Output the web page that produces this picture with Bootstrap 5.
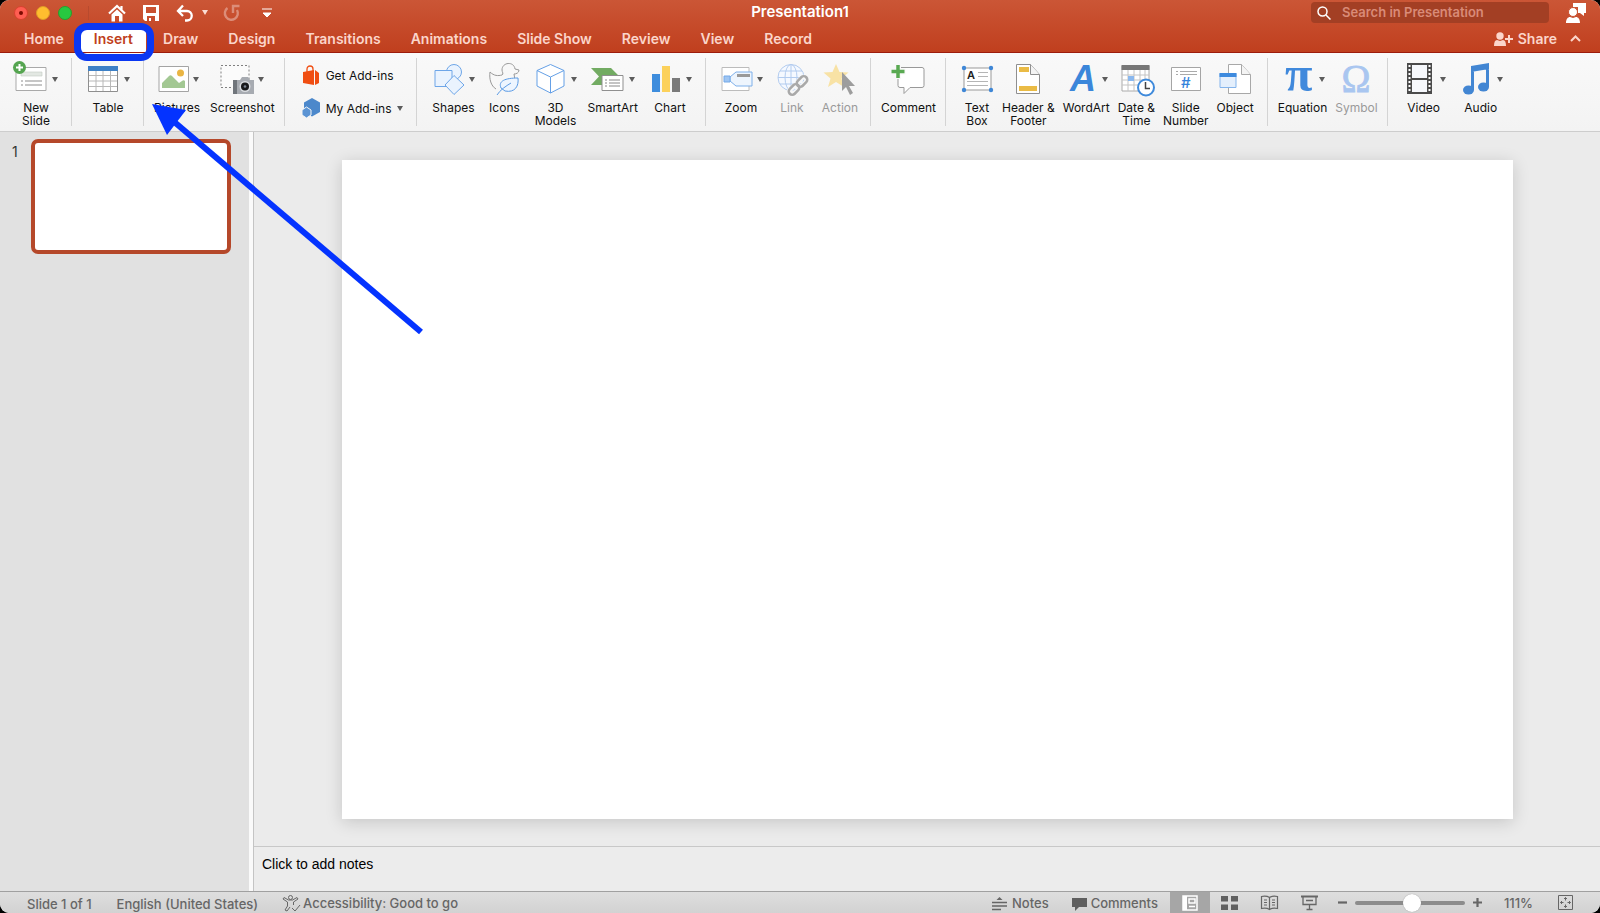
<!DOCTYPE html>
<html lang="en">
<head>
<meta charset="utf-8">
<meta name="viewport" content="width=device-width, initial-scale=1">
<title>Presentation1</title>
<link rel="stylesheet" href="https://cdn.jsdelivr.net/npm/bootstrap@5.3.0/dist/css/bootstrap.min.css">
<style>
  html { background: #000; }
  body { font-family: Inter, "Liberation Sans", sans-serif; background: #ebebeb; border-radius: 9px; color: #111; }
  button, input, textarea { font-family: inherit; }
  button { border: 0; background: none; padding: 0; color: inherit; }
  svg { display: block; overflow: visible; flex: none; }

  /* Title bar and tabs */
  .app-head { background: linear-gradient(#cb5636, #c03f1e); border-bottom: 1px solid #9c1c0c; height: 53px; }
  .title-line { height: 25px; display: grid; grid-template-columns: 1fr auto 1fr; }
  .doc-title { font-size: 15px; line-height: 24px; font-weight: 600; color: #fff; }
  .window-lights { gap: 8px; padding: 0 16px 0 14px; border-right: 1px solid #b84a2e; height: 14px; }
  .quick-tools { padding-left: 19px; gap: 16px; }
  .light { width: 14px; height: 14px; border-radius: 50%; display: flex; align-items: center; justify-content: center; }
  .light-close { background: #ff5e52; border: 1px solid #d8402f; }
  .light-close::after { content: ""; width: 4px; height: 4px; border-radius: 50%; background: #7d0a00; }
  .light-min { background: #ffbe2f; border: 1px solid #dd9b28; }
  .light-max { background: #27c840; border: 1px solid #2a9c2c; }
  .search-box { background: #a33f24; border-radius: 4px; width: 238px; height: 21px; margin-top: 2px; padding-left: 6px; gap: 11px; }
  .search-box input { background: none; border: 0; outline: 0; padding: 0; font-size: 13px; font-weight: 600; width: 190px; color: #fff; }
  .search-box input::placeholder { color: #d98b78; opacity: 1; }
  .tab-line { height: 27px; color: #fbd5ca; }
  .tab-line a, .tab-line button { font-size: 14px; line-height: 27px; font-weight: 600; color: #fbd5ca; text-decoration: none; }
  .tab-line .tab-on { background: #fff; color: #bf3f20; border-radius: 4px 4px 0 0; padding: 0 13px; margin: 3px -13px 0; line-height: 22px; position: relative; z-index: 2; }
  .ring { position: absolute; inset: -5px -8px -9px -7px; border: 7px solid #0a37f2; border-radius: 13px; pointer-events: none; }

  /* Ribbon */
  .ribbon { background: linear-gradient(#f9f9f9, #f3f3f3); border-bottom: 1px solid #cdcdcd; height: 79px; font-size: 12px; line-height: 13px; }
  .group { display: flex; align-items: flex-start; position: relative; padding: 8px 14px 0; gap: 13px; height: 100%; }
  .group::after { content: ""; position: absolute; right: 0; top: 5px; bottom: 5px; width: 1px; background: #d4d4d4; }
  .group:last-child::after { display: none; }
  .group-mid { gap: 10px; }
  .group-mid .tool { min-width: 38px; }
  .group-tight { gap: 8px; }
  .group-slim { padding-left: 10px; padding-right: 10px; }
  .group-trim { padding-left: 13px; padding-right: 12px; }
  .tool { display: flex; flex-direction: column; align-items: center; gap: 4px; color: #111; text-align: center; }
  .tool:disabled { color: #9a9a9a; }
  .tool-art { display: flex; align-items: center; gap: 4px; }
  .tool-art svg { width: 34px; height: 36px; }
  .caret { width: 0; height: 0; border: 3px solid transparent; border-top: 5px solid #5c5c5c; border-bottom: 0; flex: none; }
  .addins { flex-direction: column; gap: 13px; padding: 12px 14px 0 17px; }
  .addins button { display: flex; align-items: center; gap: 6px; height: 20px; color: #111; }

  /* Work area */
  .thumbs { width: 249px; background: #e1e1e1; padding: 7px 18px 0 12px; }
  .thumbs .thumb { width: 200px; aspect-ratio: 40 / 23; background: #fff; border: 4px solid #b5482a; border-radius: 7px; }
  .thumb-no { font-size: 14px; line-height: 26px; width: 19px; color: #333; }
  .divider { width: 5px; background: #fafafa; border-right: 1px solid #c4c4c4; }
  .stage { padding: 28px 87px 27px 88px; }
  .page { background: #fff; box-shadow: 0 3px 16px rgba(0,0,0,.16); }
  .notes { border: 0; border-top: 1px solid #c8c8c8; background: #ececec; height: 45px; resize: none; padding: 7px 8px; font: 14px/20px "Liberation Sans", Arial, sans-serif; outline: 0; }
  .notes::placeholder { color: #000; opacity: 1; }

  /* Status bar */
  .status { height: 22px; border-top: 1px solid #a0a0a0; background: linear-gradient(#dedede, #d2d2d2); font-size: 13px; line-height: 21px; font-weight: 500; color: #666; border-radius: 0 0 9px 9px; padding-top: 2px; }
  .status button { font-weight: 500; }
  .status svg { stroke: #666; fill: none; }
  .view-btn { width: 40px; height: 21px; display: flex; align-items: center; justify-content: center; }
  .view-on { background: #a6a6a6; }
  .status-tail { margin-top: -2px; height: 21px; }
  .zoom-range { appearance: none; width: 110px; height: 20px; background: none; margin: 0; }
  .zoom-range::-webkit-slider-runnable-track { height: 4px; border-radius: 2px; background: #8c8c8c; }
  .zoom-range::-webkit-slider-thumb { appearance: none; width: 18px; height: 18px; margin-top: -7px; border-radius: 50%; background: #fff; box-shadow: 0 0 1px #888; }

  .pointer { position: absolute; left: 150px; top: 102px; z-index: 5; pointer-events: none; }
</style>
</head>
<body class="vh-100 d-flex flex-column overflow-hidden position-relative">

<header class="app-head flex-shrink-0">
  <div class="title-line">
    <div class="d-flex align-items-center">
      <div class="window-lights d-flex align-items-center">
        <button class="light light-close" aria-label="Close"></button>
        <button class="light light-min" aria-label="Minimize"></button>
        <button class="light light-max" aria-label="Full screen"></button>
      </div>
      <div class="quick-tools d-flex align-items-center">
        <button aria-label="Home"><svg width="18" height="18" viewBox="0 0 18 18"><path d="M1 9.500 9 2l8 7.500M13.500 2v4" fill="none" stroke="#fff" stroke-width="2.200"/><path d="M3.500 10.500 9 5.500l5.500 5v7H11V12H7v5.500H3.500z" fill="#fff"/></svg></button>
        <button aria-label="Save"><svg width="18" height="18" viewBox="0 0 18 18"><path fill-rule="evenodd" d="M1 1h16v16H3l-2-2zM4 3v6h10V3zM5 12v5h2v-3h2v3h4v-5z" fill="#fff"/></svg></button>
        <div class="d-flex align-items-center" style="gap:8px">
          <button aria-label="Undo"><svg width="18" height="18" viewBox="0 0 18 18"><path d="M7 1.500 2 7l5 5M2.500 7H11a4.500 4.500 0 0 1 0 9.500H9" fill="none" stroke="#fff" stroke-width="2.300"/></svg></button>
          <svg width="6" height="5" viewBox="0 0 6 5"><path d="M0 0h6L3 5z" fill="#fbdcd3"/></svg>
        </div>
        <button aria-label="Redo" disabled><svg width="18" height="18" viewBox="0 0 18 18"><path d="M3.500 4a6.500 6.500 0 1 0 9.500 2M9 9V2h6.500" fill="none" stroke="#dc8d79" stroke-width="2.400"/></svg></button>
        <button class="ms-1" aria-label="Customize toolbar"><svg width="10" height="10" viewBox="0 0 10 10"><path d="M0 1h10M1 5h8L5 9z" fill="#fff" stroke="#fff"/></svg></button>
      </div>
    </div>
    <div class="doc-title">Presentation1</div>
    <div class="d-flex justify-content-end" style="gap:17px;padding-right:14px">
      <label class="search-box d-flex align-items-center">
        <svg width="14" height="14" viewBox="0 0 14 14"><circle cx="5.500" cy="5.500" r="4.500" fill="none" stroke="#fff" stroke-width="1.500"/><path d="m9 9 4.500 4.500" stroke="#fff" stroke-width="1.500"/></svg>
        <input type="text" placeholder="Search in Presentation" aria-label="Search in Presentation">
      </label>
      <button aria-label="Account"><svg width="20" height="20" viewBox="0 0 20 20"><path d="M7 0h13v10h-2v3l-4-3h-2V4H7z" fill="#fff"/><circle cx="7" cy="9" r="4.500" fill="#fff" stroke="#c9512f"/><path d="M0 20c0-4 2-6 4-6l3 1 3-1c2 0 4 2 4 6z" fill="#fff"/></svg></button>
    </div>
  </div>
  <nav class="tab-line d-flex justify-content-between" aria-label="Ribbon tabs">
    <div class="d-flex" style="gap:30px;padding-left:24px">
      <a href="#">Home</a>
      <a href="#" class="tab-on" aria-current="page">Insert<span class="ring"></span></a>
      <a href="#">Draw</a>
      <a href="#">Design</a>
      <a href="#">Transitions</a>
      <a href="#">Animations</a>
      <a href="#">Slide Show</a>
      <a href="#">Review</a>
      <a href="#">View</a>
      <a href="#">Record</a>
    </div>
    <div class="d-flex align-items-center" style="gap:13px;padding-right:19px">
      <button class="d-flex align-items-center" style="gap:4px"><svg width="20" height="14" viewBox="0 0 20 14" fill="#fbd5ca"><circle cx="6" cy="4" r="3.700"/><path d="M0 14c0-4 1-6 3-6l3 1 3-1c2 0 3 2 3 6zM14 3h2v3h3v2h-3v3h-2V8h-3V6h3z"/></svg>Share</button>
      <button aria-label="Collapse ribbon"><svg width="11" height="7" viewBox="0 0 11 7"><path d="m1 6 4.500-4.500L10 6" fill="none" stroke="#fbd5ca" stroke-width="2"/></svg></button>
    </div>
  </nav>
</header>

<section class="ribbon d-flex flex-shrink-0" aria-label="Insert">
  <div class="group">
    <button class="tool"><span class="tool-art">
      <svg viewBox="0 0 34 36"><path d="M2 6.500h30v23H2z" fill="#fff" stroke="#a9a9a9"/><path d="M7 11h21v4H7z" fill="#e3e8e3" stroke="#c3c9c3" stroke-width=".6"/><path d="M7 20h2m2 0h17M7 24h2m2 0h17" stroke="#8d8d8d"/><circle cx="5.500" cy="6.500" r="6.500" fill="#55a550"/><path d="M5.500 3v7M2 6.500h7" stroke="#fff" stroke-width="2"/></svg>
      <i class="caret"></i></span><span>New<br>Slide</span></button>
  </div>
  <div class="group">
    <button class="tool"><span class="tool-art">
      <svg viewBox="0 0 34 36"><path d="M2.500 5.500h29v25h-29z" fill="#fff" stroke="#8e8e8e"/><path d="M10 9v21M17 9v21M24.500 9v21M3 14.500h28M3 20h28M3 25.500h28" stroke="#b8b8b8"/><path d="M2 5h30v5H2z" fill="#3d80c6"/></svg>
      <i class="caret"></i></span><span>Table</span></button>
  </div>
  <div class="group group-slim group-mid">
    <button class="tool"><span class="tool-art">
      <svg viewBox="0 0 34 36"><path d="M4 5.500h29.500v25H4z" fill="#fff" stroke="#a4a4a4"/><circle cx="25.500" cy="12" r="3.500" fill="#eab543"/><path d="M7 27v-5l7-7c1-1 2-1 3 0l7 7 3-2c1-1 2-1 3 0v7z" fill="#a3c893"/></svg>
      <i class="caret"></i></span><span>Pictures</span></button>
    <button class="tool"><span class="tool-art">
      <svg viewBox="0 0 34 36"><path d="M1 4.500h28v22H1z" fill="#fbfbfb" stroke="#808080" stroke-dasharray="2 2"/><path d="M13 19h7l2-3h6l2 3h4v14H13z" fill="#a7abb1"/><path d="M13 19h4v14h-4z" fill="#70757b"/><circle cx="25" cy="25.500" r="5.500" fill="#d9dce0"/><circle cx="25" cy="25.500" r="4" fill="#18191b"/><circle cx="25" cy="25.500" r="1.300" fill="#7c8592"/></svg>
      <i class="caret"></i></span><span>Screenshot</span></button>
  </div>
  <div class="group addins">
    <button><svg width="18" height="20" viewBox="0 0 18 20"><path d="M1 7l11-2v15L1 18zM13 5l4 3v10l-4 2z" fill="#f04e12"/><path d="M5 8V4c0-4 6-4 6 0v3" fill="none" stroke="#f04e12" stroke-width="1.300"/></svg>Get Add-ins</button>
    <button><svg width="18" height="20" viewBox="0 0 18 20"><path d="m10 0 8 4.500V14l-8 4.500L2 14V4.500z" fill="#4c88cb"/><path d="m4.500 9 4.500 3v5l-4.500 3L0 17v-5z" fill="#5b94d4" stroke="#f7f7f7"/></svg>My Add-ins <i class="caret"></i></button>
  </div>
  <div class="group group-mid">
    <button class="tool"><span class="tool-art">
      <svg viewBox="0 0 34 36" fill="#eaf3fe" stroke="#6ea6e8"><circle cx="23" cy="11" r="7.500"/><path d="M4 9.500h17v16H4z"/><path d="m23 14.500 10 9.500-10 9.500-9-9.500z"/></svg>
      <i class="caret"></i></span><span>Shapes</span></button>
    <button class="tool"><span class="tool-art">
      <svg viewBox="0 0 34 36"><path d="M9 28C4 25 2 18 3 11c4 4 8 4 12 3 2-1 0-3 0-5 0-8 12-9 13-1l4 1c0 3-3 4-5 4l1 6" fill="#f8f8f8" stroke="#999"/><path d="M14 27c-3-7 4-10 17-10 1 8-3 15-13 13z" fill="#edf5ff" stroke="#5b9be5"/><path d="M10 34c3-5 9-9 14-12" fill="none" stroke="#5b9be5"/></svg>
      </span><span>Icons</span></button>
    <button class="tool"><span class="tool-art">
      <svg viewBox="0 0 34 36"><path d="m17.500 3.500 13.500 6V25l-13.500 7L4 25V9.500z" fill="#fff" stroke="#65a0e6"/><path d="M4 9.500 17.500 16 31 9.500M17.500 16v16" fill="none" stroke="#65a0e6"/></svg>
      <i class="caret"></i></span><span>3D<br>Models</span></button>
    <button class="tool"><span class="tool-art">
      <svg viewBox="0 0 34 36"><path d="M0 7h20l9 9-6 8H0l8-8.500z" fill="#72ab62"/><path d="M11 14.500h21v15H11z" fill="#fff" stroke="#8f8f8f"/><path d="M14 19h2m2 0h11M14 22h2m2 0h11M14 25h2m2 0h11" stroke="#888"/></svg>
      <i class="caret"></i></span><span>SmartArt</span></button>
    <button class="tool"><span class="tool-art">
      <svg viewBox="0 0 34 36"><path d="M4 13h8v18H4z" fill="#3e8ddd"/><path d="M14 5h8v26h-8z" fill="#fcd15b"/><path d="M24 17h8v14h-8z" fill="#7a7a7a"/></svg>
      <i class="caret"></i></span><span>Chart</span></button>
  </div>
  <div class="group group-mid group-trim">
    <button class="tool"><span class="tool-art">
      <svg viewBox="0 0 34 36"><path d="M3 6.500h27v23H3z" fill="#fff" stroke="#bcbcbc"/><path d="M11 16l6-5h16v14H17l-6-5z" fill="#eef5fd" stroke="#7fb0ea"/><path d="M5 15h6v6H5z" fill="#9ec5f3" stroke="#75a9e7"/><path d="M18 14.500h13" stroke="#999" stroke-width="3"/></svg>
      <i class="caret"></i></span><span>Zoom</span></button>
    <button class="tool" disabled><span class="tool-art">
      <svg viewBox="0 0 34 36" fill="none"><g stroke="#b3ccef"><circle cx="16" cy="16.500" r="13" fill="#f5f9ff"/><ellipse cx="16" cy="16.500" rx="6" ry="13"/><path d="M16 3.500v26M3 16.500h26M5 10h22M5 23h22"/></g><g stroke="#f7f7f7" stroke-width="5"><rect x="13" y="26" width="12" height="6" rx="3" transform="rotate(-45 19 29)"/><rect x="21" y="18" width="12" height="6" rx="3" transform="rotate(-45 27 21)"/></g><g stroke="#a9a9a9" stroke-width="2.500"><rect x="13" y="25" width="12" height="7" rx="3.500" transform="rotate(-45 19 28.500)"/><rect x="21" y="17" width="12" height="7" rx="3.500" transform="rotate(-45 27 20.500)"/></g></svg>
      </span><span>Link</span></button>
    <button class="tool" disabled><span class="tool-art">
      <svg viewBox="0 0 34 36"><path d="m13 3 3.500 8 9 .5-7 6L21 26l-8-5-8 5 2.500-8.500-7-6 9-.5z" fill="#f8e2a5"/><path d="M19 11v19l4-4 4 8 3-2-4-7h6z" fill="#9d9d9d"/></svg>
      </span><span>Action</span></button>
  </div>
  <div class="group group-slim">
    <button class="tool"><span class="tool-art">
      <svg viewBox="0 0 34 36"><path d="M9 6.500h22q2 0 2 2v16q0 2-2 2H19l-6 6v-6H9q-2 0-2-2v-16q0-2 2-2z" fill="#fff" stroke="#999"/><path d="M7 3v15M0 10.500h14.500" stroke="#f8f8f8" stroke-width="6"/><path d="M7 4v13M0.500 10.500h13" stroke="#59a952" stroke-width="3.500"/></svg>
      </span><span>Comment</span></button>
  </div>
  <div class="group group-tight">
    <button class="tool"><span class="tool-art">
      <svg viewBox="0 0 34 36"><path d="M4 7h27v22H4z" fill="#fff" stroke="#999"/><g fill="#3f87d6"><circle cx="4" cy="7" r="2.200"/><circle cx="31" cy="7" r="2.200"/><circle cx="4" cy="29" r="2.200"/><circle cx="31" cy="29" r="2.200"/></g><text x="7" y="18" font-family="Inter" font-size="11" font-weight="600" fill="#222">A</text><path d="M18 11.500h10M18 15.500h10M7 20.500h21M7 24.500h21" stroke="#b5b5b5"/></svg>
      </span><span>Text<br>Box</span></button>
    <button class="tool"><span class="tool-art">
      <svg viewBox="0 0 34 36"><path d="M5.500 3.500h14l9 10v19h-23z" fill="#fff" stroke="#8f8f8f"/><path d="M19.500 3.500v10h9" fill="#f4f4f4" stroke="#8f8f8f"/><path d="M8 6h10v5H8zM8 25h18v5H8z" fill="#eabb45"/></svg>
      </span><span>Header &amp;<br>Footer</span></button>
    <button class="tool"><span class="tool-art">
      <svg viewBox="0 0 34 36"><text x="6" y="30" font-family="Liberation Sans, sans-serif" font-size="36" font-weight="700" font-style="italic" fill="#3b86da">A</text></svg>
      <i class="caret"></i></span><span>WordArt</span></button>
    <button class="tool"><span class="tool-art">
      <svg viewBox="0 0 34 36"><path d="M3 5h27v25H3z" fill="#fff" stroke="#aaa"/><path d="M9 9v21M15 9v21M21 9v21M26 9v21M3 14h27M3 19h27M3 24h27" stroke="#c4c4c4"/><path d="M2.500 4h28v5h-28z" fill="#777"/><path d="M9 15h6v5H9z" fill="#8ab8ee"/><circle cx="27" cy="26.500" r="8" fill="#fff" stroke="#3f8adb" stroke-width="2"/><path d="M26.500 21v6.500H31" fill="none" stroke="#444" stroke-width="1.500"/></svg>
      </span><span>Date &amp;<br>Time</span></button>
    <button class="tool"><span class="tool-art">
      <svg viewBox="0 0 34 36"><path d="M2.500 6.500h29v23h-29z" fill="#fff" stroke="#a5a5a5"/><path d="M7 10.500h2m2 0h17M7 13.500h2m2 0h17" stroke="#aaa"/><text x="12" y="27" font-family="Inter" font-size="15" font-weight="500" fill="#3482db">#</text></svg>
      </span><span>Slide<br>Number</span></button>
    <button class="tool"><span class="tool-art">
      <svg viewBox="0 0 34 36"><path d="M10.500 3.500h13l9 10v19h-22z" fill="#fff" stroke="#a8a8a8"/><path d="M23.500 3.500v10h9" fill="#f4f4f4" stroke="#a8a8a8"/><path d="M2 12.500h16v14H2z" fill="#e4effc" stroke="#85b5ec"/><path d="M1.500 12h17v4h-17z" fill="#3d8ade"/></svg>
      </span><span>Object</span></button>
  </div>
  <div class="group group-slim group-tight">
    <button class="tool"><span class="tool-art">
      <svg viewBox="0 0 34 36"><text x="4" y="30" font-family="Liberation Serif, serif" font-size="50" font-weight="700" fill="#4089dc">π</text></svg>
      <i class="caret"></i></span><span>Equation</span></button>
    <button class="tool" disabled><span class="tool-art">
      <svg viewBox="0 0 34 36"><text x="17" y="31" text-anchor="middle" font-family="Liberation Serif, serif" font-size="39" fill="#a9c6f0" stroke="#a9c6f0" stroke-width=".8">Ω</text></svg>
      </span><span>Symbol</span></button>
  </div>
  <div class="group">
    <button class="tool"><span class="tool-art">
      <svg viewBox="0 0 34 36"><path d="M5 2h25v31H5z" fill="#4b4b4b"/><path d="M10 4h15v13H10zM10 19h15v12H10z" fill="#f6f8fc"/><path d="M7.500 4v28M27.500 4v28" stroke="#fff" stroke-width="2" stroke-dasharray="2 2"/></svg>
      <i class="caret"></i></span><span>Video</span></button>
    <button class="tool"><span class="tool-art">
      <svg viewBox="0 0 34 36" fill="#4286d3"><path d="M12 5 30 2v6L12 11zM12 5h3v24h-3zM27 4h3v22h-3z"/><ellipse cx="9.500" cy="29" rx="5.500" ry="4.500"/><ellipse cx="24.500" cy="26" rx="5.500" ry="4.500"/></svg>
      <i class="caret"></i></span><span>Audio</span></button>
  </div>
</section>

<main class="d-flex flex-grow-1" style="min-height:0">
  <aside class="thumbs d-flex align-items-start flex-shrink-0" aria-label="Slides">
    <span class="thumb-no">1</span>
    <button class="thumb flex-shrink-0" aria-label="Slide 1"></button>
  </aside>
  <div class="divider flex-shrink-0"></div>
  <div class="d-flex flex-column flex-grow-1">
    <div class="stage d-flex flex-grow-1"><div class="page flex-grow-1"></div></div>
    <textarea class="notes w-100 flex-shrink-0 d-block" placeholder="Click to add notes" aria-label="Notes"></textarea>
  </div>
</main>

<footer class="status d-flex justify-content-between flex-shrink-0">
  <div class="d-flex" style="gap:25px;padding-left:27px">
    <span>Slide 1 of 1</span>
    <span>English (United States)</span>
    <button class="d-flex align-items-center" style="gap:3px"><svg width="17" height="17" viewBox="0 0 17 17"><circle cx="7.500" cy="2.500" r="2"/><path d="M1 2.500 5.500 5h4L14 2.500l1 1.500-4.500 3v3M1 2.500 0 4l4.500 3v4L2 15l2 1 3-4M9 13l3 3 5-6"/></svg>Accessibility: Good to go</button>
  </div>
  <div class="status-tail d-flex align-items-center" style="padding-right:27px">
    <button class="d-flex align-items-center" style="gap:5px;padding-top:2px"><svg width="15" height="14" viewBox="0 0 15 14"><path d="M0 5.500h15M0 9h15M0 12.500h9" stroke-width="1.300"/><path d="m4.500 3 3-3 3 3z" fill="#666" stroke="none"/></svg>Notes</button>
    <button class="d-flex align-items-center" style="gap:4px;padding-top:2px;margin:0 12px 0 23px"><svg width="15" height="14" viewBox="0 0 15 14"><path d="M0 1h15v9H7l-4 4v-4H0z" fill="#5f5f5f" stroke="none"/></svg>Comments</button>
    <button class="view-btn view-on" aria-label="Normal view"><svg width="16" height="16" viewBox="0 0 16 16"><path d="M1 1h14v14H1z" stroke="#fff" stroke-width="1.500"/><path d="M1 1h4v14H1z" fill="#fff" stroke="none"/><path d="M7 4h6v4H7zM7 11.500h6" stroke="#fff" stroke-width="1.500"/></svg></button>
    <button class="view-btn" aria-label="Slide sorter"><svg width="18" height="14" viewBox="0 0 18 14"><path d="M0 0h7v5.500H0zM10 0h7v5.500h-7zM0 8.500h7V14H0zM10 8.500h7V14h-7z" fill="#606060" stroke="none"/></svg></button>
    <button class="view-btn" aria-label="Reading view"><svg width="17" height="15" viewBox="0 0 17 15"><path d="M.5 1.500q5-1 8 1 3-2 8-1v12q-5-1-8 1-3-2-8-1zM8.500 2.500v12M3 5h3M3 7.500h3M3 10h3M11 5h3M11 7.500h3M11 10h3" stroke-width="1.200"/></svg></button>
    <button class="view-btn" aria-label="Slide show"><svg width="17" height="15" viewBox="0 0 17 15"><path d="M0 1.500h17" stroke-width="2"/><path d="M2 2v7.500h13V2M5 5.500h7M8.500 9.500v5M5.500 14.500h6" stroke-width="1.300"/></svg></button>
    <div class="d-flex align-items-center" style="gap:8px;padding-left:8px">
      <button aria-label="Zoom out"><svg width="9" height="9" viewBox="0 0 9 9"><path d="M0 4.500h9" stroke-width="2.200"/></svg></button>
      <input class="zoom-range" type="range" min="0" max="100" value="52" aria-label="Zoom">
      <button aria-label="Zoom in"><svg width="9" height="9" viewBox="0 0 9 9"><path d="M0 4.500h9M4.500 0v9" stroke-width="2.200"/></svg></button>
    </div>
    <button style="padding-top:2px;margin:0 25px 0 22px">111%</button>
    <button aria-label="Fit slide to window"><svg width="15" height="15" viewBox="0 0 15 15"><path d="M.5.5h14v14H.5z"/><path d="M7.500 2.500v3M6 4l1.500-1.500L9 4M7.500 12.500v-3M6 11l1.500 1.500L9 11M2.500 7.500h3M4 6 2.500 7.500 4 9M12.500 7.500h-3M11 6l1.500 1.500L11 9"/></svg></button>
  </div>
</footer>

<svg class="pointer" width="274" height="234" viewBox="0 0 274 234" aria-hidden="true"><path d="M22 18 271 230" stroke="#0433ff" stroke-width="6"/><path d="m2 2 34 6-19 25z" fill="#0433ff"/></svg>

<script src="https://cdn.jsdelivr.net/npm/bootstrap@5.3.0/dist/js/bootstrap.bundle.min.js"></script>
</body>
</html>
